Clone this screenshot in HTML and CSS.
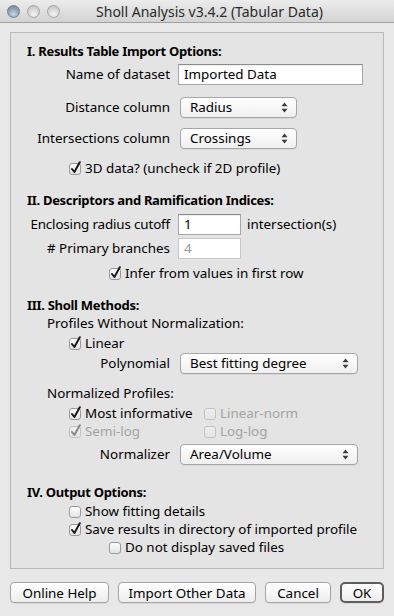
FILE: index.html
```html
<!DOCTYPE html>
<html lang="en">
<head>
    <meta charset="UTF-8">
    <meta name="viewport" content="width=device-width, initial-scale=1.0">
    <title>Sholl Analysis v3.4.2 (Tabular Data)</title>
    <link rel="stylesheet" href="styles.css">
</head>
<body>

    <!-- shared checkbox / arrow drawings -->
    <svg class="defs" width="0" height="0">
        <defs>
            <linearGradient id="boxFill" x1="0" y1="0" x2="0" y2="1">
                <stop offset="0" stop-color="#ffffff"/>
                <stop offset="1" stop-color="#e2e2e2"/>
            </linearGradient>
            <symbol id="cbOff" viewBox="0 0 14 14">
                <rect x="1.5" y="2.5" width="11" height="11" rx="2.5" fill="url(#boxFill)" stroke="#9a9a9a"/>
            </symbol>
            <symbol id="cbOn" viewBox="0 0 14 14">
                <rect x="1.5" y="2.5" width="11" height="11" rx="2.5" fill="url(#boxFill)" stroke="#9a9a9a"/>
                <path d="M4 8 L6.4 11 L11.8 1.2" fill="none" stroke="#1a1a1a" stroke-width="2" stroke-linecap="round" stroke-linejoin="round"/>
            </symbol>
            <symbol id="updown" viewBox="0 0 7 11">
                <polygon points="0.5,4.2 3.5,0.6 6.5,4.2" fill="#3a3a3a"/>
                <polygon points="0.5,6.8 3.5,10.4 6.5,6.8" fill="#3a3a3a"/>
            </symbol>
        </defs>
    </svg>

    <div class="window">
        <header class="titlebar">
            <div class="lights">
                <span class="light graphite"></span>
                <span class="light"></span>
                <span class="light"></span>
            </div>
            <div class="title">Sholl Analysis v3.4.2 (Tabular Data)</div>
        </header>

        <main class="content">
            <div class="panel">

                <!-- I. Import options -->
                <section class="group g1">
                    <h2>I. Results Table Import Options:</h2>
                    <div class="field name-row">
                        <label>Name of dataset</label>
                        <div class="textbox wide">Imported Data</div>
                    </div>
                    <div class="field distance-row">
                        <label>Distance column</label>
                        <div class="popup short">Radius<svg class="arrows"><use href="#updown"/></svg></div>
                    </div>
                    <div class="field">
                        <label>Intersections column</label>
                        <div class="popup short">Crossings<svg class="arrows"><use href="#updown"/></svg></div>
                    </div>
                    <div class="check indent1 after-field">
                        <svg class="box"><use href="#cbOn"/></svg>3D data? (uncheck if 2D profile)
                    </div>
                </section>

                <!-- II. Descriptors -->
                <section class="group g2">
                    <h2>II. Descriptors and Ramification Indices:</h2>
                    <div class="field cutoff-row">
                        <label>Enclosing radius cutoff</label>
                        <div class="textbox narrow">1</div>
                        <span class="unit">intersection(s)</span>
                    </div>
                    <div class="field branches-row">
                        <label># Primary branches</label>
                        <div class="textbox narrow disabled">4</div>
                    </div>
                    <div class="check indent2 infer-row">
                        <svg class="box"><use href="#cbOn"/></svg>Infer from values in first row
                    </div>
                </section>

                <!-- III. Methods -->
                <section class="group g3">
                    <h2>III. Sholl Methods:</h2>
                    <div class="sublabel">Profiles Without Normalization:</div>
                    <div class="check indent1 linear-row">
                        <svg class="box"><use href="#cbOn"/></svg>Linear
                    </div>
                    <div class="field">
                        <label>Polynomial</label>
                        <div class="popup long">Best fitting degree<svg class="arrows"><use href="#updown"/></svg></div>
                    </div>
                    <div class="sublabel normalized">Normalized Profiles:</div>
                    <div class="pair indent1 most-row">
                        <div class="check"><svg class="box"><use href="#cbOn"/></svg>Most informative</div>
                        <div class="check disabled"><svg class="box"><use href="#cbOff"/></svg>Linear-norm</div>
                    </div>
                    <div class="pair indent1">
                        <div class="check disabled"><svg class="box"><use href="#cbOn"/></svg>Semi-log</div>
                        <div class="check disabled"><svg class="box"><use href="#cbOff"/></svg>Log-log</div>
                    </div>
                    <div class="field normalizer-row">
                        <label>Normalizer</label>
                        <div class="popup long">Area/Volume<svg class="arrows"><use href="#updown"/></svg></div>
                    </div>
                </section>

                <!-- IV. Output -->
                <section class="group g4">
                    <h2>IV. Output Options:</h2>
                    <div class="check indent1 show-row">
                        <svg class="box"><use href="#cbOff"/></svg>Show fitting details
                    </div>
                    <div class="check indent1">
                        <svg class="box"><use href="#cbOn"/></svg>Save results in directory of imported profile
                    </div>
                    <div class="check indent2">
                        <svg class="box"><use href="#cbOff"/></svg>Do not display saved files
                    </div>
                </section>
            </div>

            <div class="buttons">
                <button class="btn help">Online Help</button>
                <button class="btn import">Import Other Data</button>
                <button class="btn cancel">Cancel</button>
                <button class="btn ok">OK</button>
            </div>
        </main>
    </div>

</body>
</html>
```

FILE: styles.css
```css
body {
    margin: 0;
    padding: 0;
    font-family: "Noto Sans", "DejaVu Sans", sans-serif;
    font-size: 13.4px;
    color: #000;
    background-color: #e8e8e8;
}

.defs {
    position: absolute;
    width: 0;
    height: 0;
}

.window {
    width: 394px;
    height: 616px;
    background-color: #e8e8e8;
}

/* Title bar */
.titlebar {
    display: flex;
    align-items: center;
    height: 22px;
    background: linear-gradient(#ececec, #d3d3d3);
    border-bottom: 1px solid #a0a0a0;
}

.lights {
    display: flex;
    gap: 7px;
    width: 61px;
    padding-left: 7px;
}

.light {
    width: 13px;
    height: 13px;
    border-radius: 50%;
    box-sizing: border-box;
    border: 1px solid #a4a4a4;
    background: radial-gradient(circle at 50% 75%, #f4f4f4 0%, #d6d6d6 55%, #bdbdbd 100%);
}

.light.graphite {
    border-color: #6f7f8e;
    background: radial-gradient(circle at 50% 75%, #c9d7e3 0%, #8fa3b5 55%, #6d8194 100%);
}

.title {
    flex: 1;
    text-align: center;
    padding-right: 43px;
    font-size: 14px;
    color: #2a2a2a;
}

/* Main content */
.content {
    padding: 9px 10px 0;
}

.panel {
    border: 1px solid #b9b9b9;
    background-color: #e4e4e4;
    padding: 9px 16px 12px;
}

h2 {
    margin: 0;
    height: 18px;
    line-height: 18px;
    font-size: 13px;
    font-weight: bold;
    letter-spacing: -0.3px;
}

.group + .group {
    margin-top: 14px;
}

.g3 {
    margin-top: 15px;
}

.group.g4 {
    margin-top: 18px;
}

/* Label + control rows */
.field {
    display: flex;
    align-items: center;
    height: 22px;
    margin-top: 9px;
}

.field label {
    display: flex;
    justify-content: flex-end;
    flex-shrink: 0;
    width: 143px;
    white-space: nowrap;
    margin-right: 8px;
}

.name-row { margin-top: 3px; }
.distance-row { margin-top: 11px; }
.cutoff-row { margin-top: 4px; }
.branches-row { margin-top: 2px; }
.g3 .field { margin-top: 0; }
.g3 .normalizer-row { margin-top: 3px; }

.cutoff-row label {
    letter-spacing: -0.15px;
}

.textbox {
    box-sizing: border-box;
    height: 21px;
    line-height: 19px;
    padding: 0 5px;
    background-color: #fff;
    border: 1px solid #a8a8a8;
    border-top-color: #8c8c8c;
    box-shadow: inset 0 1px 1px rgba(0, 0, 0, 0.08);
}

.textbox.wide { width: 185px; }
.textbox.narrow { width: 63px; }

.textbox.disabled {
    color: #9a9a9a;
    border-color: #c8c8c8;
    box-shadow: none;
}

.unit {
    margin-left: 6px;
}

.popup {
    display: flex;
    align-items: center;
    justify-content: space-between;
    box-sizing: border-box;
    height: 21px;
    margin-left: 2px;
    padding: 0 8px 0 9px;
    border: 1px solid #a6a6a6;
    border-radius: 4px;
    background: linear-gradient(#ffffff, #efefef);
    box-shadow: 0 1px 0 rgba(0, 0, 0, 0.05);
}

.popup.short { width: 117px; }
.popup.long { width: 178px; }

.arrows {
    width: 7px;
    height: 11px;
}

/* Checkbox rows */
.check {
    display: flex;
    align-items: center;
    height: 18px;
}

.check .box {
    width: 14px;
    height: 14px;
    margin-right: 3px;
}

.check.disabled {
    color: #a3a3a3;
}

.check.disabled .box {
    opacity: 0.45;
}

.indent1 { padding-left: 41px; }
.indent2 { padding-left: 81px; }

.after-field { margin-top: 10px; }
.infer-row { margin-top: 5px; }
.linear-row { margin-top: 2px; }
.most-row { margin-top: 2px; }
.show-row { margin-top: 1px; }

.pair {
    display: grid;
    grid-template-columns: 135px auto;
}

.sublabel {
    height: 18px;
    line-height: 18px;
    padding-left: 20px;
}

.sublabel.normalized {
    margin-top: 10px;
}

/* Bottom buttons */
.buttons {
    display: flex;
    justify-content: space-between;
    margin-top: 13px;
}

.btn {
    box-sizing: border-box;
    height: 21px;
    padding: 0;
    font-family: inherit;
    font-size: 13.4px;
    color: #000;
    border: 1px solid #a4a4a4;
    border-radius: 4px;
    background: linear-gradient(#ffffff, #ededed);
    box-shadow: 0 1px 0 rgba(0, 0, 0, 0.06);
}

.btn.help { width: 99px; }
.btn.import { width: 138px; }
.btn.cancel { width: 66px; }

.btn.ok {
    width: 44px;
    border: 2px solid #5e5e5e;
    border-radius: 5px;
}
```
